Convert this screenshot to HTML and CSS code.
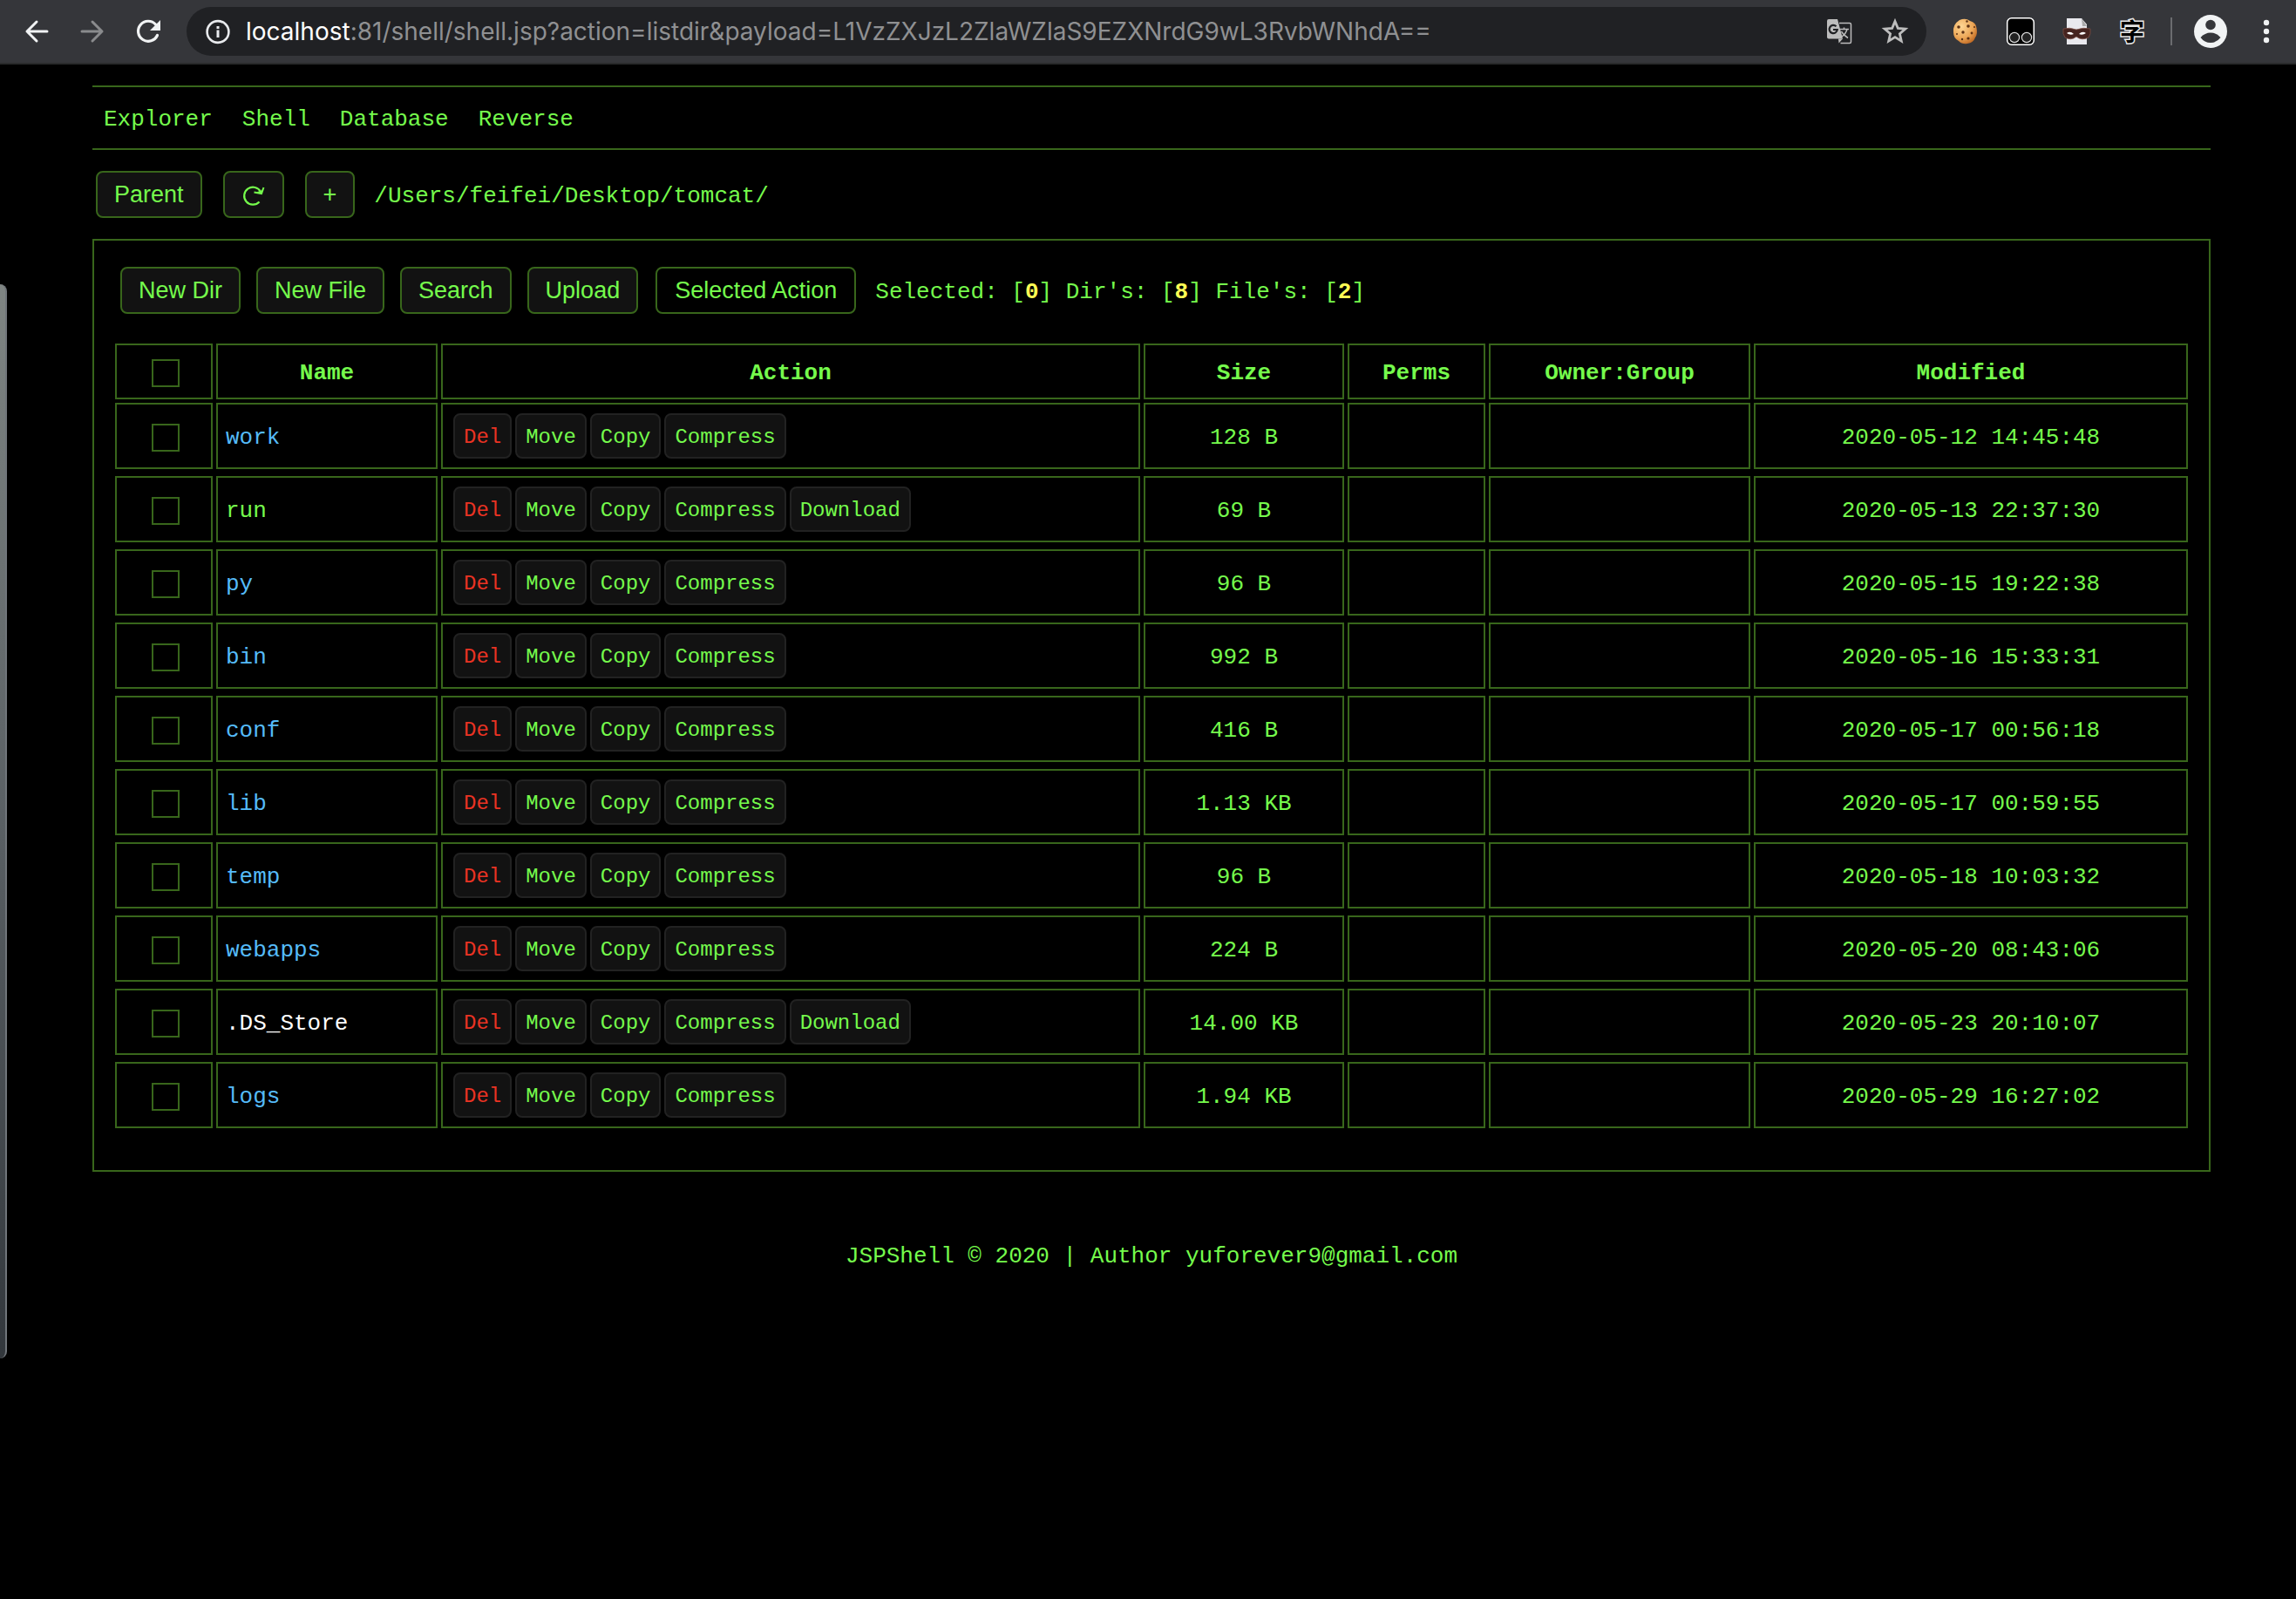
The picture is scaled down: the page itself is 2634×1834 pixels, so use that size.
FILE: index.html
```html
<!DOCTYPE html>
<html lang="en">
<head>
<meta charset="utf-8">
<title>JSPShell</title>
<link rel="stylesheet" href="styles.css">
</head>
<body>
<header class="toolbar">
  <button class="tool" aria-label="Back"><svg viewBox="0 0 40 40"><path d="M32 20H9M20 9 9 20l11 11" fill="none" stroke="#f1f3f4" stroke-width="3" stroke-linecap="round" stroke-linejoin="round"/></svg></button>
  <button class="tool" aria-label="Forward"><svg viewBox="0 0 40 40"><path d="M8 20h23M20 9l11 11-11 11" fill="none" stroke="#8a8b8d" stroke-width="3" stroke-linecap="round" stroke-linejoin="round"/></svg></button>
  <button class="tool" aria-label="Reload"><svg viewBox="0 0 40 40"><path d="M30.500 24.500A11.500 11.500 0 1 1 28.500 12" fill="none" stroke="#f1f3f4" stroke-width="3.200" stroke-linecap="round"/><path d="M34 7v12H22z" fill="#f1f3f4"/></svg></button>
  <div class="address">
    <button class="tool" aria-label="Site information"><svg viewBox="0 0 40 40"><circle cx="20" cy="20.500" r="12.400" fill="none" stroke="#e8eaed" stroke-width="2.600"/><path d="M18.500 18.500h3V27h-3zM18.500 14h3v3h-3z" fill="#e8eaed"/></svg></button>
    <div class="url"><span class="host">localhost</span>:81/shell/shell.jsp?action=listdir&amp;payload=L1VzZXJzL2ZlaWZlaS9EZXNrdG9wL3RvbWNhdA==</div>
    <button class="tool" aria-label="Translate this page"><svg viewBox="0 0 40 40"><path d="M20 10.500h12q1.500 0 1.500 1.500v20q0 1.500-1.500 1.500H21.500" fill="none" stroke="#bdbdbd" stroke-width="1.500"/><path d="M8 6h10l6 22.500H8q-2 0-2-2V8q0-2 2-2z" fill="#bdbdbd"/><path d="M19 28.500h5l-4.500 5z" fill="#bdbdbd"/><path d="M16.500 14.300a4.600 4.600 0 1 0 1.300 3.700H13" fill="none" stroke="#202124" stroke-width="2.200"/><path d="M21 17.500h10M25.500 15.500v2M29 17.500q-1.500 5.500-6 8.500M22.500 20q2 4 7.500 7.500" fill="none" stroke="#bdbdbd" stroke-width="1.500"/></svg></button>
    <button class="tool" aria-label="Bookmark"><svg viewBox="0 0 40 40"><path d="m20 8.500 3.300 7.900 8.600.7-6.500 5.600 1.900 8.400-7.300-4.500-7.300 4.500 1.900-8.400-6.500-5.600 8.600-.7z" fill="none" stroke="#bdbdbd" stroke-width="2.800" stroke-linejoin="miter"/></svg></button>
  </div>
  <button class="tool" aria-label="Cookies"><svg viewBox="0 0 40 40"><defs><radialGradient id="dough" cx=".35" cy=".3" r=".8"><stop offset="0" stop-color="#ffd795"/><stop offset=".6" stop-color="#eba555"/><stop offset="1" stop-color="#b9601c"/></radialGradient></defs><path d="M14 7q7-3 12 1 7 2 7.500 8 1.500 7-1.500 11-2 6-9 7-6 1-10-3-6-3-6-10-1-9 7-14z" fill="url(#dough)"/><g fill="#5e3214"><circle cx="22.500" cy="8.500" r="1.200"/><circle cx="24" cy="14" r="1.800"/><circle cx="13" cy="15" r="1.800"/><circle cx="31" cy="15" r="1"/><circle cx="18" cy="21" r="1.700"/><circle cx="11" cy="23" r="1"/><circle cx="28" cy="22" r="1.400"/><circle cx="24" cy="28" r="1.600"/><circle cx="17" cy="29" r="1.200"/></g></svg></button>
  <button class="tool" aria-label="User scripts"><svg viewBox="0 0 40 40"><rect x="4.700" y="4.700" width="30.600" height="30.600" rx="5" fill="#000" stroke="#fff" stroke-width="1.500"/><circle cx="13" cy="27" r="5.600" fill="#222" stroke="#ddd" stroke-width="1.200"/><circle cx="27" cy="27" r="5.600" fill="#222" stroke="#ddd" stroke-width="1.200"/></svg></button>
  <button class="tool" aria-label="Mask"><svg viewBox="0 0 40 40"><path d="M9 5h17l6 7v23H9z" fill="#e9e9ee"/><path d="m26 5 6 9h-5z" fill="#aaa"/><path d="M5 17q7-2 15 1 8-3 16-1 1 6-2 10-8 4-14-1-6 5-13 1-3-4-2-10z" fill="#45231f" stroke="#7b5147" stroke-width=".8"/><path d="M9 22q4-3 8 1-4 2-8-1zM23 23q4-4 8-1-4 3-8 1z" fill="#fff"/></svg></button>
  <button class="tool" aria-label="Characters"><svg viewBox="0 0 40 40"><text x="20" y="31" class="glyph">字</text></svg></button>
  <span class="divider"></span>
  <button class="tool" aria-label="Profile"><svg viewBox="0 0 40 40"><circle cx="20" cy="20" r="19" fill="#f1f3f4"/><circle cx="20" cy="12.500" r="5.800" fill="#35363a"/><path d="M8.500 27q5-5.500 11.500-5.500T31.500 27Q27 33 20 33T8.500 27z" fill="#35363a"/></svg></button>
  <button class="tool" aria-label="Menu"><svg viewBox="0 0 40 40" fill="#f1f3f4"><circle cx="20" cy="10" r="3.200"/><circle cx="20" cy="20" r="3.200"/><circle cx="20" cy="30" r="3.200"/></svg></button>
</header>
<div class="edge-handle"></div>
<main class="page">
  <nav class="menu"><a href="#">Explorer</a><a href="#">Shell</a><a href="#">Database</a><a href="#">Reverse</a></nav>
  <div class="location">
    <button class="btn">Parent</button>
    <button class="btn" aria-label="Refresh"><svg class="refresh" viewBox="1 -2 28 28"><path d="M21.500 20.500A10 10 0 1 1 23 9" fill="none" stroke="#75fb4c" stroke-width="2.200"/><path d="M15.500 9.500 24 11l2.500-7" fill="none" stroke="#75fb4c" stroke-width="2"/><path d="m17 9.500 7 1.500 1.500-5-2.500 2z" fill="#75fb4c"/></svg></button>
    <button class="btn">+</button>
    <span class="info">/Users/feifei/Desktop/tomcat/</span>
  </div>
  <section class="panel">
    <div class="actions">
      <button class="btn">New Dir</button>
      <button class="btn">New File</button>
      <button class="btn">Search</button>
      <button class="btn">Upload</button>
      <button class="btn btn-plain">Selected Action</button>
      <span class="info">Selected: [<b>0</b>] Dir's: [<b>8</b>] File's: [<b>2</b>]</span>
    </div>
    <table class="files">
      <thead><tr><th><input type="checkbox" aria-label="Select all"></th><th>Name</th><th>Action</th><th>Size</th><th>Perms</th><th>Owner:Group</th><th>Modified</th></tr></thead>
      <tbody>
        <tr><td><input type="checkbox" aria-label="work"></td><td><a class="dir" href="#">work</a></td><td><button class="op del">Del</button><button class="op">Move</button><button class="op">Copy</button><button class="op">Compress</button></td><td>128 B</td><td></td><td></td><td>2020-05-12 14:45:48</td></tr>
        <tr><td><input type="checkbox" aria-label="run"></td><td><a href="#">run</a></td><td><button class="op del">Del</button><button class="op">Move</button><button class="op">Copy</button><button class="op">Compress</button><button class="op">Download</button></td><td>69 B</td><td></td><td></td><td>2020-05-13 22:37:30</td></tr>
        <tr><td><input type="checkbox" aria-label="py"></td><td><a class="dir" href="#">py</a></td><td><button class="op del">Del</button><button class="op">Move</button><button class="op">Copy</button><button class="op">Compress</button></td><td>96 B</td><td></td><td></td><td>2020-05-15 19:22:38</td></tr>
        <tr><td><input type="checkbox" aria-label="bin"></td><td><a class="dir" href="#">bin</a></td><td><button class="op del">Del</button><button class="op">Move</button><button class="op">Copy</button><button class="op">Compress</button></td><td>992 B</td><td></td><td></td><td>2020-05-16 15:33:31</td></tr>
        <tr><td><input type="checkbox" aria-label="conf"></td><td><a class="dir" href="#">conf</a></td><td><button class="op del">Del</button><button class="op">Move</button><button class="op">Copy</button><button class="op">Compress</button></td><td>416 B</td><td></td><td></td><td>2020-05-17 00:56:18</td></tr>
        <tr><td><input type="checkbox" aria-label="lib"></td><td><a class="dir" href="#">lib</a></td><td><button class="op del">Del</button><button class="op">Move</button><button class="op">Copy</button><button class="op">Compress</button></td><td>1.13 KB</td><td></td><td></td><td>2020-05-17 00:59:55</td></tr>
        <tr><td><input type="checkbox" aria-label="temp"></td><td><a class="dir" href="#">temp</a></td><td><button class="op del">Del</button><button class="op">Move</button><button class="op">Copy</button><button class="op">Compress</button></td><td>96 B</td><td></td><td></td><td>2020-05-18 10:03:32</td></tr>
        <tr><td><input type="checkbox" aria-label="webapps"></td><td><a class="dir" href="#">webapps</a></td><td><button class="op del">Del</button><button class="op">Move</button><button class="op">Copy</button><button class="op">Compress</button></td><td>224 B</td><td></td><td></td><td>2020-05-20 08:43:06</td></tr>
        <tr><td><input type="checkbox" aria-label=".DS_Store"></td><td><a class="hidden-file" href="#">.DS_Store</a></td><td><button class="op del">Del</button><button class="op">Move</button><button class="op">Copy</button><button class="op">Compress</button><button class="op">Download</button></td><td>14.00 KB</td><td></td><td></td><td>2020-05-23 20:10:07</td></tr>
        <tr><td><input type="checkbox" aria-label="logs"></td><td><a class="dir" href="#">logs</a></td><td><button class="op del">Del</button><button class="op">Move</button><button class="op">Copy</button><button class="op">Compress</button></td><td>1.94 KB</td><td></td><td></td><td>2020-05-29 16:27:02</td></tr>
      </tbody>
    </table>
  </section>
  <footer class="footer">JSPShell © 2020 | Author yuforever9@gmail.com</footer>
</main>
</body>
</html>
```
FILE: styles.css
```css
:root {
  --green: #75fb4c;
  --line: #38661b;
  --face: #121212;
}

* { box-sizing: border-box; }

body {
  margin: 0;
  min-height: 100vh;
  position: relative;
  background: #000;
  color: var(--green);
  font: 26px/30px "Courier New", "Liberation Mono", monospace;
}

a { color: inherit; text-decoration: none; }
button { cursor: pointer; }

/* Browser toolbar */
.toolbar {
  display: flex;
  align-items: center;
  gap: 24px;
  padding: 8px 14px 8px 22px;
  background: #35363a;
  border-bottom: 2px solid #292a2b;
}

.tool {
  flex: none;
  width: 40px;
  height: 40px;
  padding: 0;
  border: 0;
  background: none;
}

.tool svg { display: block; width: 40px; height: 40px; }

.address {
  flex: 1;
  min-width: 0;
  display: flex;
  align-items: center;
  gap: 24px;
  height: 56px;
  padding: 0 16px;
  border-radius: 28px;
  background: #202124;
}

.url {
  flex: 1;
  min-width: 0;
  margin-left: -12px;
  overflow: hidden;
  white-space: nowrap;
  color: #8f9092;
  font: 28px/36px Inter, Roboto, sans-serif;
}

.host { color: #fff; }

.glyph {
  font: bold 28px "Noto Sans CJK SC", sans-serif;
  text-anchor: middle;
  fill: #000;
  stroke: #e8e8e8;
  stroke-width: 3px;
  paint-order: stroke;
}

.divider { width: 2px; height: 32px; background: #6b6c6f; }

/* Grip of the panel docked at the window's left edge */
.edge-handle {
  position: absolute;
  left: 0;
  top: 326px;
  width: 8px;
  height: 1232px;
  border-right: 2px solid #70757a;
  border-radius: 0 8px 8px 0;
  background: linear-gradient(#7f8583, #5a6064 50%, #32373c);
}

/* Page */
.page { padding: 24px 98px 24px 106px; }

.menu {
  display: flex;
  gap: 34px;
  padding: 22px 13px 18px;
  border: solid var(--line);
  border-width: 2px 0;
}

.location {
  display: flex;
  align-items: center;
  gap: 24px;
  margin: 24px 0;
  padding-left: 4px;
}

.location .info { margin-left: -2px; }
.info { padding-top: 4px; }

.btn {
  height: 54px;
  padding: 0 19px;
  border: 2px solid var(--line);
  border-radius: 8px;
  background: var(--face);
  color: var(--green);
  font: 27px/30px "Liberation Sans", Arial, sans-serif;
}

.btn-plain { background: #000; margin: 0 4px 0 2px; padding: 0 20px; }

.refresh { display: block; width: 28px; height: 28px; }

.panel {
  padding: 30px 24px 48px;
  border: 2px solid var(--line);
}

.actions {
  display: flex;
  align-items: center;
  gap: 18px;
  padding-left: 6px;
  margin-bottom: 34px;
}

.actions b { color: #fffd54; }

.files { display: grid; gap: 4px; }
.files thead, .files tbody { display: grid; gap: 8px; }

.files tr {
  display: grid;
  grid-template-columns: 112fr 254fr 802fr 230fr 158fr 300fr 498fr;
  gap: 4px;
}

.files th, .files td {
  display: flex;
  align-items: center;
  justify-content: center;
  min-width: 0;
  height: 76px;
  padding: 4px 0 0;
  border: 2px solid var(--line);
}

.files th { height: 64px; }

.files td:nth-child(2) { justify-content: flex-start; padding-left: 9px; }
.files td:nth-child(3) { justify-content: flex-start; gap: 4px; padding: 0 0 0 12px; }

.files input {
  appearance: none;
  width: 32px;
  height: 32px;
  margin: 0 0 0 4px;
  border: 2px solid var(--line);
}

.dir { color: #55bbf9; }
.hidden-file { color: #fff; }

.op {
  height: 52px;
  padding: 4px 10px 0;
  border: 2px solid #222;
  border-radius: 8px;
  background: var(--face);
  color: var(--green);
  font: 24px/30px "Courier New", "Liberation Mono", monospace;
}

.del { color: #ea3323; }

.footer { padding-top: 82px; text-align: center; }
```
